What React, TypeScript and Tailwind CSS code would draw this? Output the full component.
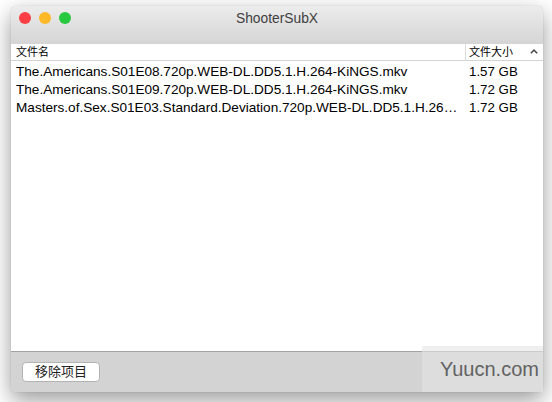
import React from 'react';

const files = [
  { name: 'The.Americans.S01E08.720p.WEB-DL.DD5.1.H.264-KiNGS.mkv', size: '1.57 GB' },
  { name: 'The.Americans.S01E09.720p.WEB-DL.DD5.1.H.264-KiNGS.mkv', size: '1.72 GB' },
  { name: 'Masters.of.Sex.S01E03.Standard.Deviation.720p.WEB-DL.DD5.1.H.26…', size: '1.72 GB' },
];

const sans = "font-['Helvetica_Neue','Liberation_Sans','Noto_Sans_CJK_SC',sans-serif]";

export default function App() {
  return (
    <div className={`relative w-[552px] h-[402px] overflow-hidden bg-white pl-[11px] pt-[6px] ${sans}`}>
      <div className="flex h-[386px] w-[532px] flex-col overflow-hidden rounded-[5px] shadow-[0_8px_22px_rgba(0,0,0,0.4),0_0_1px_rgba(0,0,0,0.3)]">
        {/* title bar */}
        <div className="grid h-[38px] grid-cols-[1fr_auto_1fr] bg-gradient-to-b from-[#ececec] to-[#d5d5d5] pt-[4px]">
          <div className="flex gap-[8px] pl-[8px] pt-[2px]">
            <span className="h-[12px] w-[12px] rounded-full bg-[#fc3f45]" />
            <span className="h-[12px] w-[12px] rounded-full bg-[#fdb927]" />
            <span className="h-[12px] w-[12px] rounded-full bg-[#29c93f]" />
          </div>
          <div className="pt-[1px] text-[13.8px] leading-[16px] text-[#404040]">ShooterSubX</div>
          <div />
        </div>

        {/* table */}
        <div className="flex flex-1 flex-col border-b border-[#a3a3a3] bg-white">
          <div className="mb-[1px] flex h-[17px] border-b border-[#d4d4d4] text-[11px] leading-[16px] text-black">
            <div className="w-[454px] pl-[5px]">文件名</div>
            <div className="flex flex-1 items-center justify-between border-l border-[#dcdcdc] pl-[3px] pr-[5px]">
              <span>文件大小</span>
              <svg width="8" height="5" viewBox="0 0 8 5" className="mb-[2px]">
                <path d="M0.8 4.3 L4 1.1 L7.2 4.3" fill="none" stroke="#4a4a4a" strokeWidth="1.5" />
              </svg>
            </div>
          </div>
          {files.map((f, i) => (
            <div key={i} className="flex h-[18px] text-[13.6px] leading-[20px] text-black">
              <div className="w-[454px] whitespace-nowrap pl-[5px]">{f.name}</div>
              <div className="pl-[4px] text-[13.3px]">{f.size}</div>
            </div>
          ))}
        </div>

        {/* bottom bar */}
        <div className="flex h-[40px] items-start bg-[#d3d3d3] pl-[11px] pt-[10px]">
          <button className="h-[20px] w-[78px] rounded-[4px] border border-[#b3b3b3] bg-white text-[13px] leading-[18px] text-[#222]">
            移除项目
          </button>
        </div>
      </div>

      {/* watermark */}
      <div className="absolute left-[422px] top-[346px] h-[46px] w-[121px] bg-[#e4e4e4]/60 pl-[18px] pt-[11px] text-[20px] leading-[24px] text-[#626262] font-['Liberation_Sans',sans-serif]">
        Yuucn.com
      </div>
    </div>
  );
}
